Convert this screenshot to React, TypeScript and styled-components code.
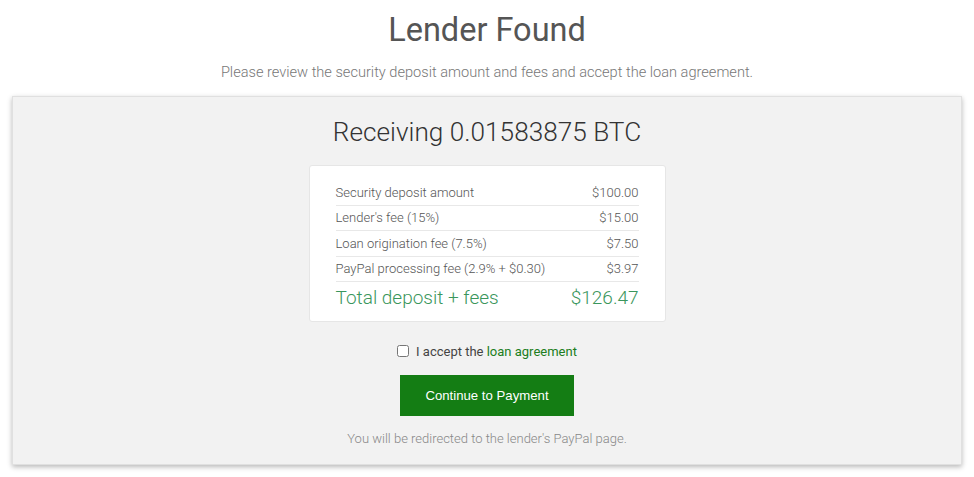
import styled, { createGlobalStyle } from "styled-components";

const GlobalStyle = createGlobalStyle`
  html, body {
    margin: 0;
    padding: 0;
    background: #ffffff;
    font-family: Roboto, "Liberation Sans", Arial, sans-serif;
  }
  * {
    box-sizing: border-box;
  }
`;

const StyledPage = styled.div`
  display: flex;
  flex-direction: column;
  align-items: center;
  padding: 9px 12px 10px;
`;

const StyledTitle = styled.h1`
  margin: 0;
  font-size: 32.5px;
  font-weight: 400;
  color: #555555;
  line-height: 42px;
`;

const StyledSubtitle = styled.p`
  margin: 10px 0 0;
  font-size: 14.6px;
  font-weight: 300;
  color: #777777;
  line-height: 22px;
`;

const StyledPanel = styled.div`
  margin-top: 13px;
  width: 100%;
  background: #f2f2f2;
  border: 1px solid #e0e0e0;
  box-shadow: 0 2px 5px rgba(0, 0, 0, 0.28);
  display: flex;
  flex-direction: column;
  align-items: center;
  padding: 18px 0 15px;
`;

const StyledReceiving = styled.h2`
  margin: 0;
  font-size: 26.2px;
  font-weight: 300;
  color: #333333;
  line-height: 34px;
`;

const StyledCard = styled.div`
  margin-top: 16px;
  width: 357px;
  background: #ffffff;
  border: 1px solid #e6e6e6;
  border-radius: 3px;
  padding: 14px 26px 8px;
`;

const StyledRow = styled.div<{ $total?: boolean }>`
  display: flex;
  justify-content: space-between;
  align-items: center;
  height: ${(p) => (p.$total ? "31px" : "25.5px")};
  font-size: ${(p) => (p.$total ? "19px" : "13px")};
  font-weight: 300;
  color: ${(p) => (p.$total ? "#3a965c" : "#555555")};
  border-bottom: ${(p) => (p.$total ? "none" : "1px solid #e8e8e8")};
`;

const StyledAccept = styled.label`
  margin-top: 20px;
  display: flex;
  align-items: center;
  gap: 7px;
  font-size: 13px;
  color: #444444;
  line-height: 20px;
`;

const StyledCheckbox = styled.input`
  margin: 0;
  width: 12px;
  height: 12px;
  position: relative;
  top: -1px;
`;

const StyledLink = styled.a`
  color: #207d20;
  text-decoration: none;
`;

const StyledButton = styled.button`
  margin-top: 13px;
  width: 174px;
  height: 41px;
  border: none;
  background: #147d14;
  color: #ffffff;
  font-family: "Liberation Sans", Arial, sans-serif;
  font-size: 13.2px;
  cursor: pointer;
`;

const StyledNote = styled.p`
  margin: 13px 0 0;
  font-size: 13px;
  font-weight: 300;
  color: #888888;
  line-height: 20px;
`;

const rows = [
  { label: "Security deposit amount", value: "$100.00" },
  { label: "Lender's fee (15%)", value: "$15.00" },
  { label: "Loan origination fee (7.5%)", value: "$7.50" },
  { label: "PayPal processing fee (2.9% + $0.30)", value: "$3.97" },
];

export default function App() {
  return (
    <>
      <GlobalStyle />
      <StyledPage>
        <StyledTitle>Lender Found</StyledTitle>
        <StyledSubtitle>
          Please review the security deposit amount and fees and accept the loan agreement.
        </StyledSubtitle>
        <StyledPanel>
          <StyledReceiving>Receiving 0.01583875 BTC</StyledReceiving>
          <StyledCard>
            {rows.map((r) => (
              <StyledRow key={r.label}>
                <span>{r.label}</span>
                <span>{r.value}</span>
              </StyledRow>
            ))}
            <StyledRow $total>
              <span>Total deposit + fees</span>
              <span>$126.47</span>
            </StyledRow>
          </StyledCard>
          <StyledAccept>
            <StyledCheckbox type="checkbox" />
            <span>
              I accept the <StyledLink href="#">loan agreement</StyledLink>
            </span>
          </StyledAccept>
          <StyledButton>Continue to Payment</StyledButton>
          <StyledNote>You will be redirected to the lender's PayPal page.</StyledNote>
        </StyledPanel>
      </StyledPage>
    </>
  );
}
